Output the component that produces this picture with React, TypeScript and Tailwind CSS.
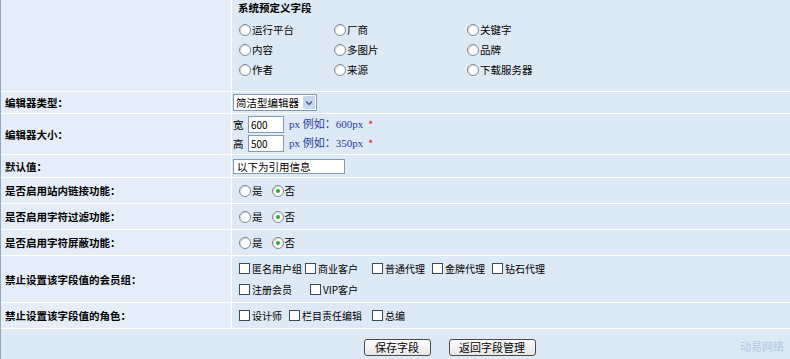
import React from "react";

const font = { fontFamily: '"SimSun", "Noto Sans CJK SC", sans-serif' };
const serif = { fontFamily: '"Liberation Serif", "Noto Sans CJK SC", serif' };

function Radio({ checked = false }: { checked?: boolean }) {
  return (
    <span className="inline-flex h-[12px] w-[12px] shrink-0 items-center justify-center rounded-full border border-[#7c8a99] bg-white shadow-[inset_1px_1px_1px_rgba(0,0,0,0.15)]">
      {checked && <span className="h-[4px] w-[4px] rounded-full bg-[#2eaa2e]" />}
    </span>
  );
}

function Box() {
  return <span className="inline-block h-[11px] w-[11px] shrink-0 border border-[#3b4a5c] bg-white" />;
}

function RadioItem({ label, checked }: { label: string; checked?: boolean }) {
  return (
    <span className="inline-flex items-center gap-[1px] whitespace-nowrap">
      <Radio checked={checked} />
      <span>{label}</span>
    </span>
  );
}

function CheckItem({ label, w }: { label: string; w?: string }) {
  return (
    <span className={`inline-flex items-center gap-[2px] whitespace-nowrap ${w ?? ""}`}>
      <Box />
      <span className="text-[10px]">{label}</span>
    </span>
  );
}

function Row({ label, h, children }: { label?: string; h: string; children: React.ReactNode }) {
  return (
    <div className={`grid grid-cols-[230px_1fr] gap-px ${h}`}>
      <div className="flex items-center bg-[#e5eef8] pl-[4px] font-bold">{label}</div>
      <div className="flex items-center bg-[#dde9f5] pl-[7px]">{children}</div>
    </div>
  );
}

function YesNo() {
  return (
    <div className="flex items-center gap-[9px]">
      <RadioItem label="是" />
      <RadioItem label="否" checked />
    </div>
  );
}

function SizeLine({ name, value, example }: { name: string; value: string; example: string }) {
  return (
    <div className="flex items-center">
      <span className="w-[15px]">{name}</span>
      <span className="flex h-[17px] w-[36px] items-start border border-[#7f9db9] bg-white pl-[2px] pt-[1px] text-[10px]">
        {value}
      </span>
      <span className="ml-[5px] text-[11px] text-[#1f3fa0]" style={serif}>
        px 例如：{example}
      </span>
      <span className="ml-[5px] text-[#e01818]">*</span>
    </div>
  );
}

export default function App() {
  return (
    <div className="h-[359px] w-[790px] overflow-hidden bg-white text-[10.5px] leading-[13px] text-black" style={font}>
      <div className="flex h-full flex-col gap-px border-l border-[#8ea9c6] bg-white">
        <div className="grid h-[91px] grid-cols-[230px_1fr] gap-px">
          <div className="bg-[#e5eef8]" />
          <div className="bg-[#dde9f5] pl-[6px] pt-[1px]">
            <div className="font-bold">系统预定义字段</div>
            <div className="mt-[9px] grid grid-cols-[95px_133px_120px] gap-y-[7px] pl-[1px]">
              <RadioItem label="运行平台" />
              <RadioItem label="厂商" />
              <RadioItem label="关键字" />
              <RadioItem label="内容" />
              <RadioItem label="多图片" />
              <RadioItem label="品牌" />
              <RadioItem label="作者" />
              <RadioItem label="来源" />
              <RadioItem label="下载服务器" />
            </div>
          </div>
        </div>

        <Row label="编辑器类型：" h="h-[21px]">
          <div className="-ml-[6px] flex h-[17px] w-[84px] items-center whitespace-nowrap border border-[#7f9db9] bg-white pl-[2px]">
            <span className="flex-1">简洁型编辑器</span>
            <span className="mr-[1px] flex h-[13px] w-[12px] items-center justify-center bg-[#c3d7f0]">
              <svg width="8" height="6" viewBox="0 0 8 6">
                <path d="M1 1.5 L4 4.5 L7 1.5" fill="none" stroke="#4d6185" strokeWidth="1.5" />
              </svg>
            </span>
          </div>
        </Row>

        <Row label="编辑器大小：" h="h-[40px]">
          <div className="-ml-[6px] flex flex-col gap-[2px]">
            <SizeLine name="宽" value="600" example="600px" />
            <SizeLine name="高" value="500" example="350px" />
          </div>
        </Row>

        <Row label="默认值：" h="h-[22px]">
          <div className="-ml-[6px] flex h-[15px] w-[112px] items-center whitespace-nowrap border border-[#7f9db9] bg-white pl-[3px]">
            以下为引用信息
          </div>
        </Row>

        <Row label="是否启用站内链接功能：" h="h-[25px]">
          <YesNo />
        </Row>
        <Row label="是否启用字符过滤功能：" h="h-[25px]">
          <YesNo />
        </Row>
        <Row label="是否启用字符屏蔽功能：" h="h-[25px]">
          <YesNo />
        </Row>

        <Row label="禁止设置该字段值的会员组：" h="h-[46px]">
          <div className="flex flex-col gap-[8px]">
            <div className="flex items-center">
              <CheckItem label="匿名用户组" w="w-[66px]" />
              <CheckItem label="商业客户" w="w-[67px]" />
              <CheckItem label="普通代理" w="w-[60px]" />
              <CheckItem label="金牌代理" w="w-[60px]" />
              <CheckItem label="钻石代理" />
            </div>
            <div className="flex items-center">
              <CheckItem label="注册会员" w="w-[71px]" />
              <CheckItem label="VIP客户" />
            </div>
          </div>
        </Row>

        <Row label="禁止设置该字段值的角色：" h="h-[25px]">
          <div className="flex items-center">
            <CheckItem label="设计师" w="w-[50px]" />
            <CheckItem label="栏目责任编辑" w="w-[83px]" />
            <CheckItem label="总编" />
          </div>
        </Row>

        <div className="relative flex flex-1 items-start justify-center gap-[18px] bg-[#dde9f5] pl-[108px] pt-[10px]">
          <button className="h-[17px] w-[67px] rounded-[3px] border border-[#4a4a4a] bg-gradient-to-b from-white to-[#e6e6e6] text-[11px] leading-[13px]">
            保存字段
          </button>
          <button className="h-[17px] w-[87px] rounded-[3px] border border-[#4a4a4a] bg-gradient-to-b from-white to-[#e6e6e6] text-[11px] leading-[13px]">
            返回字段管理
          </button>
          <span className="absolute bottom-[6px] right-[6px] text-[11px] text-[#b3c8de]">动易网络</span>
        </div>
      </div>
    </div>
  );
}
